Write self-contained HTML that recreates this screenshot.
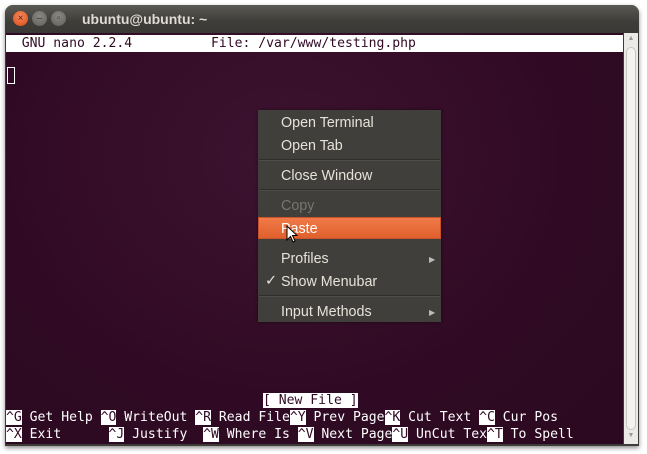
<!DOCTYPE html>
<html><head><style>
body{margin:0;width:647px;height:454px;background:#fff;position:relative;overflow:hidden;font-family:"Liberation Sans",sans-serif}
.win{position:absolute;left:5px;top:5px;width:634px;height:441px;border-radius:8px 8px 0 0;background:#3c3b37;box-shadow:0 2px 5px rgba(0,0,0,.45)}
.title{position:absolute;left:5px;top:5px;width:634px;height:28px;border-radius:8px 8px 0 0;background:linear-gradient(#5a5954,#3e3d39 60%,#3a3935)}
.tt{position:absolute;left:82px;top:11px;color:#dfdbd2;font-weight:bold;font-size:14px}
.b{position:absolute;top:11px;width:15px;height:15px;border-radius:50%;font-size:10px;line-height:15px;text-align:center;color:#3c3b37}
.term{position:absolute;left:6px;top:33px;width:617px;height:411px;background:radial-gradient(ellipse at 45% 30%,#3d1330,#300a24 60%,#2c0920);font-family:"DejaVu Sans Mono",monospace;font-size:13.1px;color:#fff}
.ln{position:absolute;left:0;height:17px;line-height:17px;white-space:pre}
.inv{background:#fff;color:#300a24}
.sb{position:absolute;left:624px;top:33px;width:14px;height:411px;background:#eceae6}
.menu{position:absolute;left:258px;top:110px;width:183px;height:212px;background:#403f3b;box-shadow:0 0 3px rgba(0,0,0,.5);font-size:14.3px;color:#e6e2da}
.mi{position:absolute;left:23px}
.sep{position:absolute;left:1px;width:181px;height:1px;background:#2f2e2b;border-bottom:1px solid #4d4c48}
.ar{position:absolute;left:171px;font-size:8px;color:#bbb}
</style></head><body>
<div class="win"></div>
<div class="title"></div>
<div class="b" style="left:13px;background:radial-gradient(circle at 50% 35%,#f68a5c,#dd4814);color:#5a2010">×</div>
<div class="b" style="left:32px;background:radial-gradient(circle at 50% 35%,#8a8983,#5f5e5a)">–</div>
<div class="b" style="left:51px;background:radial-gradient(circle at 50% 35%,#8a8983,#5f5e5a)">▫</div>
<div class="tt">ubuntu@ubuntu: ~</div>
<div class="term">
<div class="ln inv" style="top:2px;width:617px">  GNU nano 2.2.4          File: /var/www/testing.php</div>
<div style="position:absolute;left:1px;top:34px;width:8px;height:17px;border:1px solid #fff;box-sizing:border-box"></div>
<div class="ln" style="top:359px;left:257px"><span class="inv">[ New File ]</span></div>
<div class="ln" style="top:376px"><span class="inv">^G</span> Get Help <span class="inv">^O</span> WriteOut <span class="inv">^R</span> Read File<span class="inv">^Y</span> Prev Page<span class="inv">^K</span> Cut Text <span class="inv">^C</span> Cur Pos</div>
<div class="ln" style="top:393px"><span class="inv">^X</span> Exit      <span class="inv">^J</span> Justify  <span class="inv">^W</span> Where Is <span class="inv">^V</span> Next Page<span class="inv">^U</span> UnCut Tex<span class="inv">^T</span> To Spell</div>
</div>
<div class="sb">
<div style="position:absolute;left:2px;top:2px;width:10px;height:10px;color:#999;font-size:7px;text-align:center">▲</div>
<div style="position:absolute;left:2px;top:14px;width:10px;height:383px;border:1px solid #c9c6c0;border-radius:5px;background:#f4f3f1;box-sizing:border-box"></div>
<div style="position:absolute;left:2px;top:399px;width:10px;height:10px;color:#999;font-size:7px;text-align:center">▼</div>
</div>
<div class="menu">
<div class="mi" style="top:5px">Open Terminal</div>
<div class="mi" style="top:28px">Open Tab</div>
<div class="sep" style="top:49px"></div>
<div class="mi" style="top:58px">Close Window</div>
<div class="sep" style="top:79px"></div>
<div class="mi" style="top:88px;color:#77756f">Copy</div>
<div style="position:absolute;left:0;top:107px;width:183px;height:22px;background:linear-gradient(#f07a48,#e0602c);border:1px solid #c8522a;box-sizing:border-box"></div>
<div class="mi" style="top:111px;color:#fff">Paste</div>
<div class="mi" style="top:141px">Profiles</div><div class="ar" style="top:145px">▶</div>
<div class="mi" style="top:164px">Show Menubar</div>
<div style="position:absolute;left:7px;top:163px">✓</div>
<div class="sep" style="top:185px"></div>
<div class="mi" style="top:194px">Input Methods</div><div class="ar" style="top:198px">▶</div>
</div>
<svg style="position:absolute;left:286px;top:225px" width="14" height="20"><path d="M1 1 L1 15 L4.5 11.5 L7 17 L9 16 L6.5 10.5 L11 10.5 Z" fill="#fff" stroke="#000" stroke-width="1"/></svg>
</body></html>
